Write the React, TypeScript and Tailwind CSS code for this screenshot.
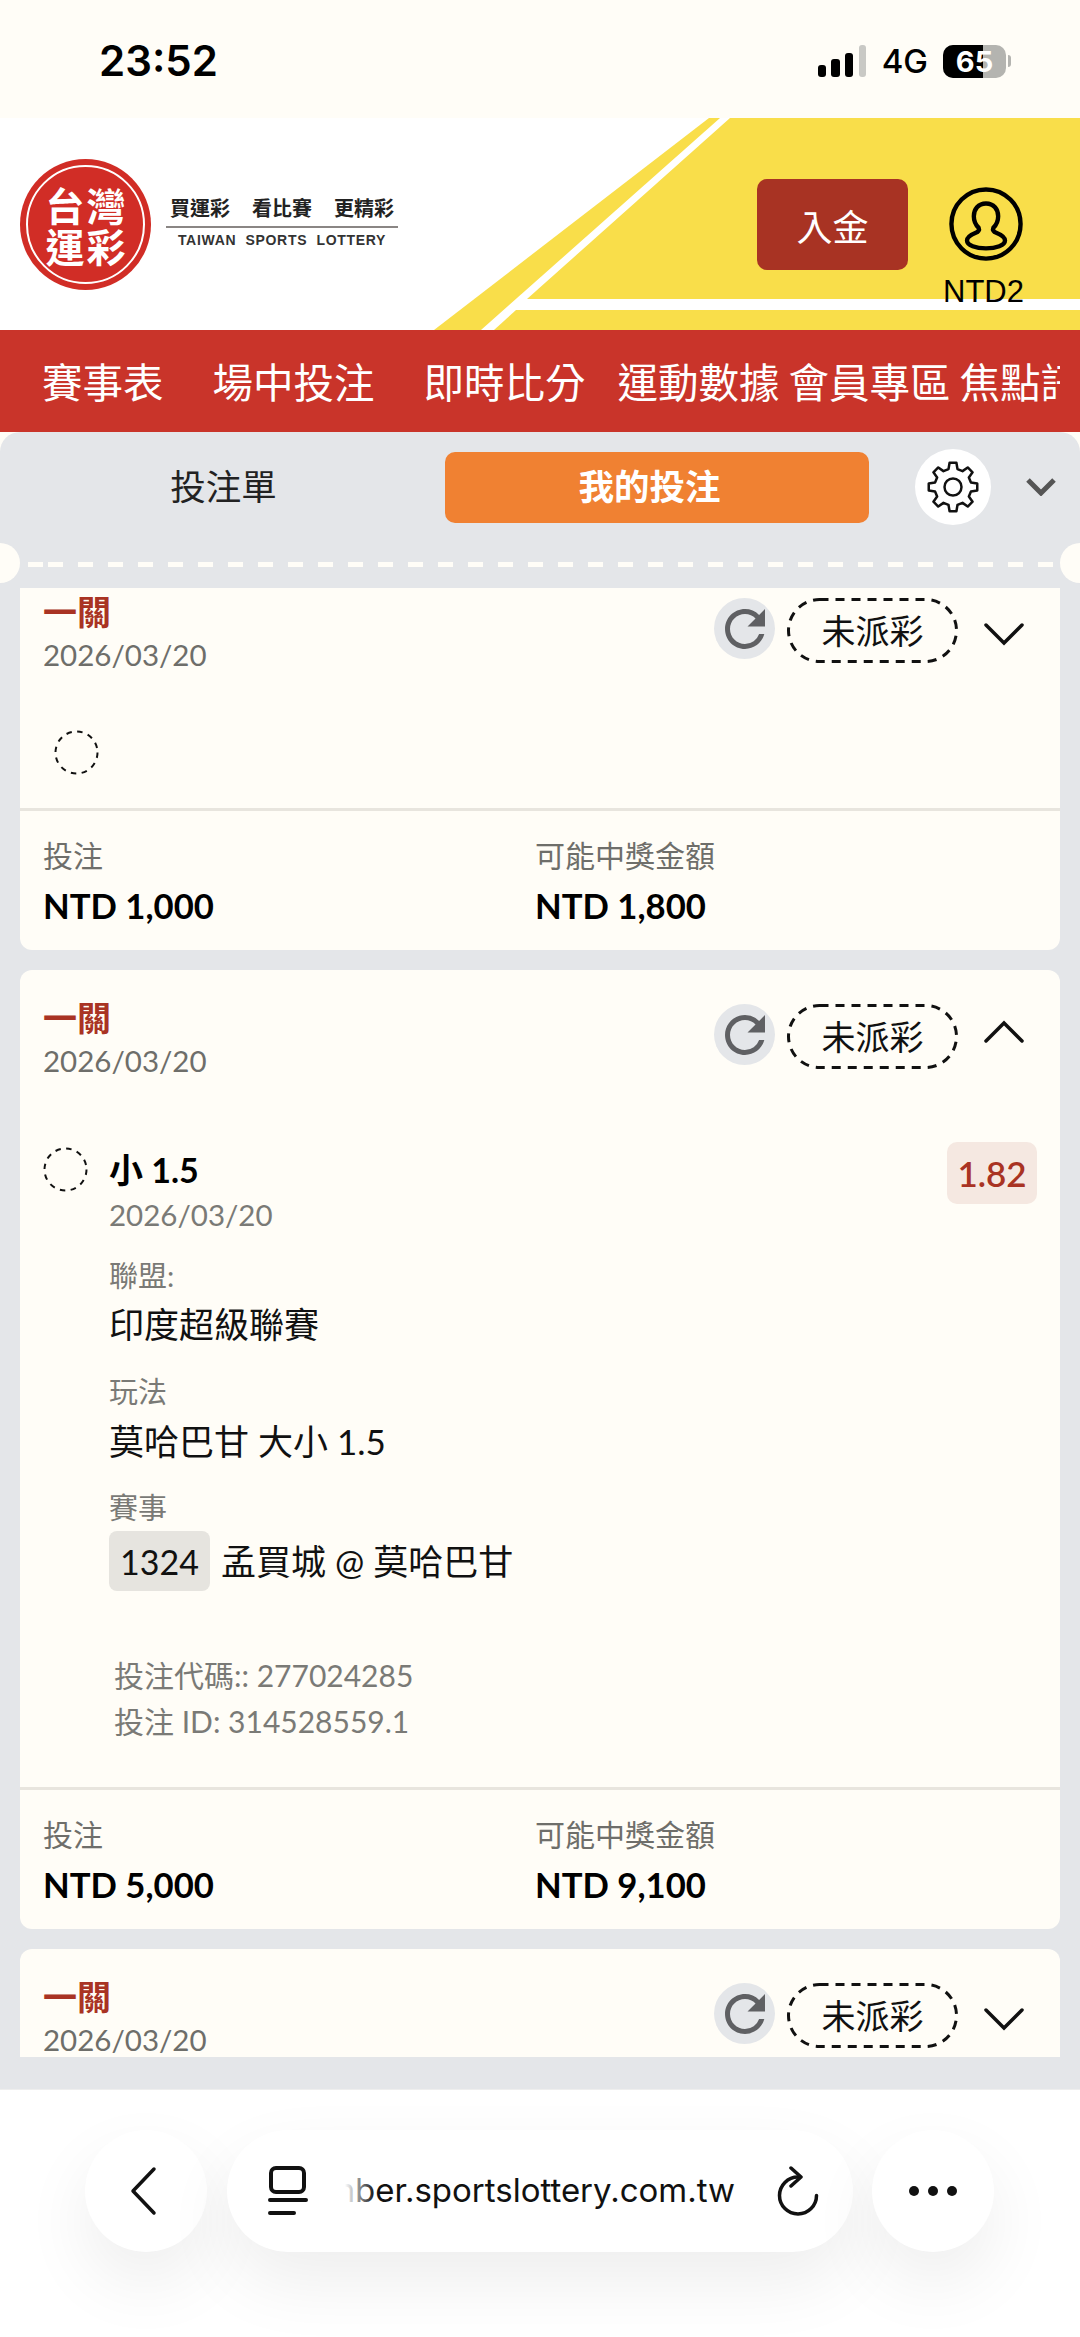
import { Fragment } from 'react'

const font = 'font-["Lato","Noto_Sans_CJK_TC",sans-serif]'

const navItems = [
  { label: '賽事表', className: 'ml-[42px]' },
  { label: '場中投注', className: 'ml-[49px]' },
  { label: '即時比分', className: 'ml-[49px]' },
  { label: '運動數據', className: 'ml-[32px]' },
  { label: '會員專區', className: 'ml-[9px]' },
  { label: '焦點訊息', className: 'ml-[9px]' },
]

// 8 tooth outline, teeth start at 12 o'clock
const gearPoints = Array.from({ length: 8 }, (_, i) => i * 45)
  .flatMap((deg) =>
    [
      [-14, 18.5],
      [-8, 24.5],
      [8, 24.5],
      [14, 18.5],
    ].map(([offset, radius]) => {
      const a = ((deg + offset - 90) * Math.PI) / 180
      return `${(30 + radius * Math.cos(a)).toFixed(2)},${(30 + radius * Math.sin(a)).toFixed(2)}`
    }),
  )
  .join(' ')

function StatusBar() {
  return (
    <div className='h-[118px] flex items-start justify-between pl-[99px] pr-[69px] pt-[36px] font-["Inter",sans-serif] text-black'>
      <span className="text-[42px] leading-[50px] font-semibold">23:52</span>
      <div className="flex items-center h-[50px]">
        <svg width="49" height="32" viewBox="0 0 49 32">
          <rect x="0" y="20" width="8" height="12" rx="3" fill="#000" />
          <rect x="13" y="14" width="9" height="18" rx="3" fill="#000" />
          <rect x="27" y="8" width="8" height="24" rx="3" fill="#000" />
          <rect x="41" y="0" width="7" height="32" rx="3" fill="#c9c9c5" />
        </svg>
        <span className="ml-[15px] text-[33px] font-medium leading-none">4G</span>
        <div className="relative ml-[15px] w-[63px] h-[33px] rounded-[10px] overflow-hidden bg-[#b4b4b0] text-center text-[29px] font-bold leading-[33px]">
          <div className="absolute left-0 top-0 bottom-0 w-[40px] bg-black" />
          <span className="relative text-white">65</span>
        </div>
        <div className="ml-[2px] w-[3px] h-[12px] rounded-r-full bg-[#b4b4b0]" />
      </div>
    </div>
  )
}

function Logo() {
  return (
    <div className="flex items-start">
      <div className="w-[131px] h-[131px] rounded-full bg-[#d12d26] p-[6px] shrink-0">
        <div className='w-full h-full rounded-full border-2 border-white grid grid-cols-[41px_41px] content-center justify-center text-white font-bold text-[39px] leading-[41px] text-center font-["Noto_Sans_CJK_TC",sans-serif]'>
          <span>台</span>
          <span>灣</span>
          <span>運</span>
          <span>彩</span>
        </div>
      </div>
      <div className="ml-[15px] mt-[34px] w-[232px] text-center">
        <div className='text-[20px] leading-[30px] font-bold text-[#222] flex justify-between px-[4px] font-["Noto_Sans_CJK_TC",sans-serif]'>
          <span>買運彩</span>
          <span>看比賽</span>
          <span>更精彩</span>
        </div>
        <div className="h-[2px] bg-[#8a8684] mt-[3px]" />
        <div className='text-[14px] leading-[24px] font-semibold tracking-[0.7px] whitespace-pre text-[#333] font-["Liberation_Sans",sans-serif]'>
          TAIWAN  SPORTS  LOTTERY
        </div>
      </div>
    </div>
  )
}

function UserIcon() {
  return (
    <svg className="ml-[5px]" width="74" height="74" viewBox="0 0 76 76" fill="none" stroke="#000" strokeWidth="4.5">
      <circle cx="38" cy="38" r="35.5" />
      <path d="M38 17c-8 0-12.500 6-12.500 13 0 5 2 9 5 12 1 2-.5 4-3 5-5 2-9 4.500-9 8 0 5 9 8 19.500 8s19.500-3 19.500-8c0-3.500-4-6-9-8-2.500-1-4-3-3-5 3-3 5-7 5-12 0-7-4.500-13-12.500-13z" />
    </svg>
  )
}

function Header() {
  return (
    <div className="relative h-[212px] bg-white overflow-hidden">
      <svg className="absolute inset-0" width="1080" height="212" viewBox="0 0 1080 212">
        <polygon points="709,0 720,0 481,212 434,212" fill="#f9de4a" />
        <polygon points="730,0 1080,0 1080,181 527,181" fill="#f9de4a" />
        <polygon points="516,192 1080,192 1080,212 494,212" fill="#f9de4a" />
      </svg>
      <div className="relative flex justify-between items-start h-full pl-[20px] pr-[56px] pt-[41px]">
        <Logo />
        <div className="flex items-start">
          <button className='mt-[20px] w-[151px] h-[91px] rounded-[10px] bg-[#a83323] text-white text-[36px] font-["Noto_Sans_CJK_TC",sans-serif]'>
            入金
          </button>
          <div className="ml-[35px] w-[81px] flex flex-col items-center mt-[28px]">
            <UserIcon />
            <span className='mt-[13px] text-[31px] leading-[36px] text-black font-["Liberation_Sans",sans-serif]'>NTD2</span>
          </div>
        </div>
      </div>
    </div>
  )
}

function Nav() {
  return (
    <div className="h-[102px] bg-[#c9342a] pr-[20px]">
      <div className='flex items-center h-full overflow-hidden text-white text-[40.500px] whitespace-nowrap font-["Noto_Sans_CJK_TC",sans-serif]'>
        {navItems.map((item) => (
          <span key={item.label} className={item.className + ' shrink-0'}>
            {item.label}
          </span>
        ))}
      </div>
    </div>
  )
}

function Tabs() {
  return (
    <div className="relative h-[156px] pt-[17px]">
      <div className={'flex items-center ' + font}>
        <div className="w-[447px] text-center text-[35.500px] text-[#222]">投注單</div>
        <div className="-ml-[2px] w-[424px] h-[71px] rounded-[10px] bg-[#f08132] text-white text-[35.500px] font-bold flex items-center justify-center">
          <span className="-ml-[15px]">我的投注</span>
        </div>
        <div className="ml-[46px] w-[76px] h-[76px] rounded-full bg-white flex items-center justify-center">
          <svg width="60" height="60" viewBox="0 0 60 60" fill="none" stroke="#111" strokeWidth="2.500" strokeLinejoin="round">
            <polygon points={gearPoints} />
            <circle cx="30" cy="30" r="8.500" />
          </svg>
        </div>
        <svg className="ml-[35px]" width="30" height="18" viewBox="0 0 30 18" fill="none" stroke="#555" strokeWidth="5">
          <path d="M2 2l13 13L28 2" />
        </svg>
      </div>
      <div className="absolute left-[20px] right-[20px] top-[130px] h-[5px] bg-[position:28px_0] bg-[repeating-linear-gradient(90deg,#fffdf7_0,#fffdf7_15px,transparent_15px,transparent_30px)]" />
      <div className="absolute -left-[20px] top-[111px] w-[40px] h-[40px] rounded-full bg-[#fffdf7]" />
      <div className="absolute -right-[20px] top-[111px] w-[40px] h-[40px] rounded-full bg-[#fffdf7]" />
    </div>
  )
}

function Chevron({ up }: { up: boolean }) {
  return (
    <svg width="40" height="24" viewBox="0 0 40 24" fill="none" stroke="#111" strokeWidth="3.500" strokeLinecap="round">
      <path d={up ? 'M2 21L20 3l18 18' : 'M2 3l18 18L38 3'} />
    </svg>
  )
}

function DashedCircle() {
  return (
    <svg className="shrink-0" width="45" height="45" viewBox="0 0 45 45" fill="none" stroke="#111" strokeWidth="2" strokeDasharray="5.500 5.500">
      <circle cx="22.500" cy="22.500" r="21" />
    </svg>
  )
}

function CardHeader({ up }: { up: boolean }) {
  return (
    <div className="flex justify-between pl-[23px] pr-[36px] pt-[28px]">
      <div>
        <div className="text-[34px] leading-[40px] font-bold text-[#a93323]">一關</div>
        <div className="mt-[3px] text-[29.500px] leading-[40px] text-[#6e6e6a]">2026/03/20</div>
      </div>
      <div className="flex items-start mt-[6px]">
        <div className="w-[61px] h-[61px] rounded-full bg-[#e4e6e9] flex items-center justify-center">
          <svg width="60" height="60" viewBox="0 0 24 24" fill="#5f6063">
            <path d="M17.650 6.350A7.958 7.958 0 0 0 12 4c-4.420 0-7.990 3.580-7.990 8s3.570 8 7.990 8c3.730 0 6.840-2.550 7.730-6h-2.080A5.990 5.990 0 0 1 12 18c-3.310 0-6-2.690-6-6s2.690-6 6-6c1.660 0 3.140.690 4.220 1.780L13 11h7V4l-2.350 2.350z" />
          </svg>
        </div>
        <div className="relative ml-[12px] w-[171px] h-[65px] flex items-center justify-center text-[34px] text-[#111]">
          <svg className="absolute inset-0" width="171" height="65" viewBox="0 0 171 65" fill="none" stroke="#111" strokeWidth="3" strokeDasharray="9 7">
            <rect x="1.500" y="1.500" width="168" height="62" rx="31" />
          </svg>
          <span className="relative">未派彩</span>
        </div>
        <div className={'ml-[26px] ' + (up ? 'mt-[16px]' : 'mt-[24px]')}>
          <Chevron up={up} />
        </div>
      </div>
    </div>
  )
}

function CardFooter({ stake, payout }: { stake: string; payout: string }) {
  return (
    <div className="border-t-[3px] border-[#e8e5de] pt-[23px] pb-[22px] pl-[23px] flex">
      <div className="w-[492px]">
        <div className="text-[30px] leading-[42px] text-[#6e6e6a]">投注</div>
        <div className="mt-[8px] text-[34.700px] leading-[44px] font-bold text-black">{stake}</div>
      </div>
      <div>
        <div className="text-[30px] leading-[42px] text-[#6e6e6a]">可能中獎金額</div>
        <div className="mt-[8px] text-[34.700px] leading-[44px] font-bold text-black">{payout}</div>
      </div>
    </div>
  )
}

function Detail({ label, children }: { label: string; children: React.ReactNode }) {
  return (
    <Fragment>
      <div className="mt-[21px] text-[29px] leading-[40px] text-[#7a7a76]">{label}</div>
      {children}
    </Fragment>
  )
}

function Selection() {
  return (
    <div className="pl-[23px] pr-[23px]">
      <div className="flex items-start pt-[66px]">
        <DashedCircle />
        <div className="ml-[21px] mt-[1px] flex-1">
          <div className="text-[34px] leading-[44px] font-bold text-black">小 1.5</div>
          <div className="mt-[3px] text-[29.500px] leading-[40px] text-[#7a7a76]">2026/03/20</div>
          <Detail label="聯盟:">
            <div className="mt-[4px] text-[35px] leading-[48px] text-[#111]">印度超級聯賽</div>
          </Detail>
          <div className="h-[3px]" />
          <Detail label="玩法">
            <div className="mt-[5px] text-[35px] leading-[48px] text-[#111]">莫哈巴甘 大小 1.5</div>
          </Detail>
          <div className="h-[2px]" />
          <Detail label="賽事">
            <div className="mt-[3px] flex items-center text-[34px] text-[#111]">
              <span className="w-[101px] h-[60px] rounded-[8px] bg-[#e6e4df] flex items-center justify-center">1324</span>
              <span className="ml-[11px] text-[35px]">孟買城 @ 莫哈巴甘</span>
            </div>
          </Detail>
        </div>
        <div className="-mt-[5px] w-[90px] h-[62px] rounded-[10px] bg-[#f5e8e1] flex items-center justify-center text-[35px] font-semibold text-[#a93323] shrink-0">
          1.82
        </div>
      </div>
      <div className="pl-[71px] pt-[61px] pb-[43px] text-[30px] leading-[46px] text-[#7a7a76]">
        <div>投注代碼:: 277024285</div>
        <div>投注 ID: 314528559.1</div>
      </div>
    </div>
  )
}

function EmptySelection() {
  return (
    <div className="pl-[34px] pt-[55px] pb-[33px]">
      <DashedCircle />
    </div>
  )
}

function BottomBar() {
  return (
    <div className="h-[248px] bg-white border-t border-[#eeeeee] pt-[40px] pl-[85px] flex items-start font-['Inter',sans-serif]">
      <div className="w-[122px] h-[122px] rounded-full bg-white shadow-[0_30px_70px_rgba(0,0,0,0.07)] flex items-center justify-center">
        <svg className="-ml-[6px]" width="30" height="50" viewBox="0 0 30 50" fill="none" stroke="#111" strokeWidth="3.500" strokeLinecap="round" strokeLinejoin="round">
          <path d="M26 3L5 25l21 22" />
        </svg>
      </div>
      <div className="ml-[20px] w-[626px] h-[122px] rounded-full bg-white shadow-[0_30px_70px_rgba(0,0,0,0.07)] flex items-center pl-[40px] pr-[34px]">
        <svg width="42" height="50" viewBox="0 0 42 50" fill="none" stroke="#111" strokeWidth="4" strokeLinecap="round" className="shrink-0">
          <rect x="4" y="2" width="33" height="24" rx="5" />
          <path d="M3 34h36M3 47h24" />
        </svg>
        <div className="relative ml-[36px] flex-1 overflow-hidden flex justify-end text-[33px] text-[#111] whitespace-nowrap">
          <span>mber.sportslottery.com.tw</span>
          <div className="absolute left-0 top-0 bottom-0 w-[30px] bg-gradient-to-r from-white to-transparent" />
        </div>
        <svg className="ml-[42px] shrink-0" width="42" height="50" viewBox="0 0 42 50" fill="none" stroke="#111" strokeWidth="3.500" strokeLinecap="round" strokeLinejoin="round">
          <path d="M21 11A18.500 18.500 0 1 0 39.500 29.500" />
          <path d="M14 2l10 9-10 9" />
        </svg>
      </div>
      <div className="ml-[19px] w-[122px] h-[122px] rounded-full bg-white shadow-[0_30px_70px_rgba(0,0,0,0.07)] flex items-center justify-center gap-[9px]">
        <span className="w-[10px] h-[10px] rounded-full bg-[#111]" />
        <span className="w-[10px] h-[10px] rounded-full bg-[#111]" />
        <span className="w-[10px] h-[10px] rounded-full bg-[#111]" />
      </div>
    </div>
  )
}

export default function App() {
  return (
    <div className="w-[1080px] h-[2337px] overflow-hidden bg-[#fffdf7] flex flex-col">
      <StatusBar />
      <Header />
      <Nav />
      <div className="relative flex-1 min-h-0 flex flex-col rounded-t-[20px] bg-[#e4e6e9] overflow-hidden">
        <Tabs />
        <div className="mx-[20px] h-[1469px] overflow-hidden">
          <div className={'-mt-[24px] flex flex-col gap-[20px] ' + font}>
            <div className="rounded-[12px] bg-[#fffdf7]">
              <CardHeader up={false} />
              <EmptySelection />
              <CardFooter stake="NTD 1,000" payout="NTD 1,800" />
            </div>
            <div className="rounded-[12px] bg-[#fffdf7]">
              <CardHeader up />
              <Selection />
              <CardFooter stake="NTD 5,000" payout="NTD 9,100" />
            </div>
            <div className="rounded-[12px] bg-[#fffdf7]">
              <CardHeader up={false} />
              <EmptySelection />
              <CardFooter stake="NTD 1,000" payout="NTD 1,800" />
            </div>
          </div>
        </div>
        <div className="flex-1" />
      </div>
      <BottomBar />
    </div>
  )
}
